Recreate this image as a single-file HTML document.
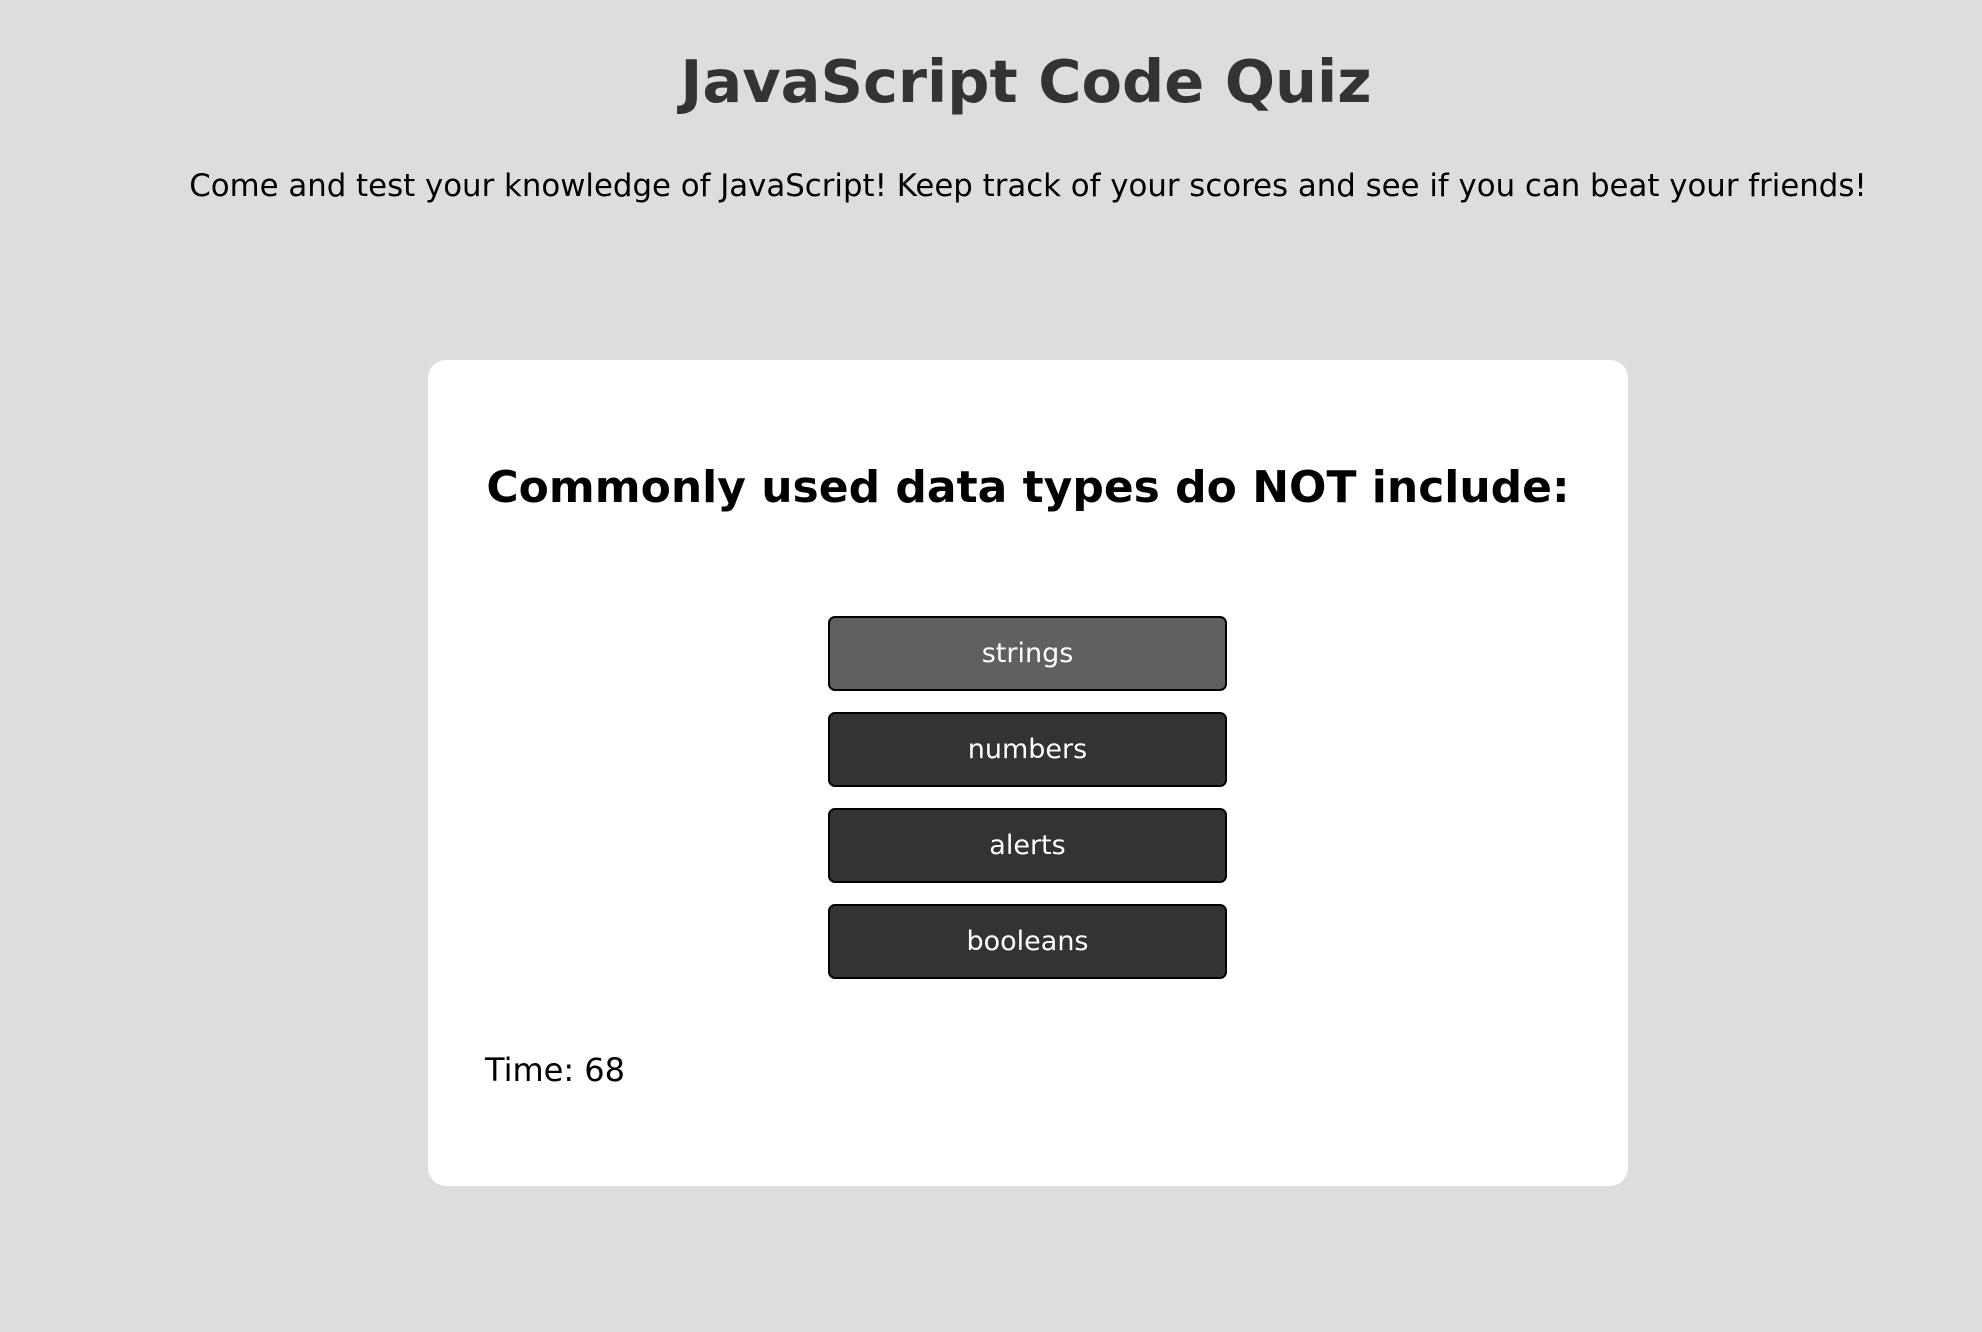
<!DOCTYPE html>
<html><head><meta charset="utf-8"><style>
html,body{margin:0;padding:0;background:#dddddd;width:1982px;height:1332px;overflow:hidden;font-family:"DejaVu Sans","Liberation Sans",sans-serif;}
h1{position:absolute;left:0;width:1982px;top:42px;margin:0;text-align:center;font-size:59px;font-weight:bold;color:#333;line-height:80px;padding-left:70px;box-sizing:border-box;}
.sub{position:absolute;left:0;width:1982px;top:164px;text-align:center;font-size:30.8px;color:#000;line-height:44px;margin:0;padding-left:74px;box-sizing:border-box;}
.card{position:absolute;left:428px;top:360px;width:1200px;height:826px;background:#fff;border-radius:18px;}
.q{position:absolute;left:428px;width:1200px;top:456px;text-align:center;font-size:44px;font-weight:bold;color:#000;line-height:64px;margin:0;white-space:nowrap;}
.btn{position:absolute;left:828px;width:399px;height:75px;box-sizing:border-box;border:2px solid #000;border-radius:7px;background:#333;color:#fff;font-size:27px;text-align:center;line-height:71px;}
.time{position:absolute;left:485px;top:1048px;font-size:32px;color:#000;line-height:44px;}
</style></head><body>
<h1>JavaScript Code Quiz</h1>
<p class="sub">Come and test your knowledge of JavaScript! Keep track of your scores and see if you can beat your friends!</p>
<div class="card"></div>
<p class="q">Commonly used data types do NOT include:</p>
<div class="btn" style="top:616px;background:#606060">strings</div>
<div class="btn" style="top:712px">numbers</div>
<div class="btn" style="top:808px">alerts</div>
<div class="btn" style="top:904px">booleans</div>
<div class="time">Time: 68</div>
</body></html>
